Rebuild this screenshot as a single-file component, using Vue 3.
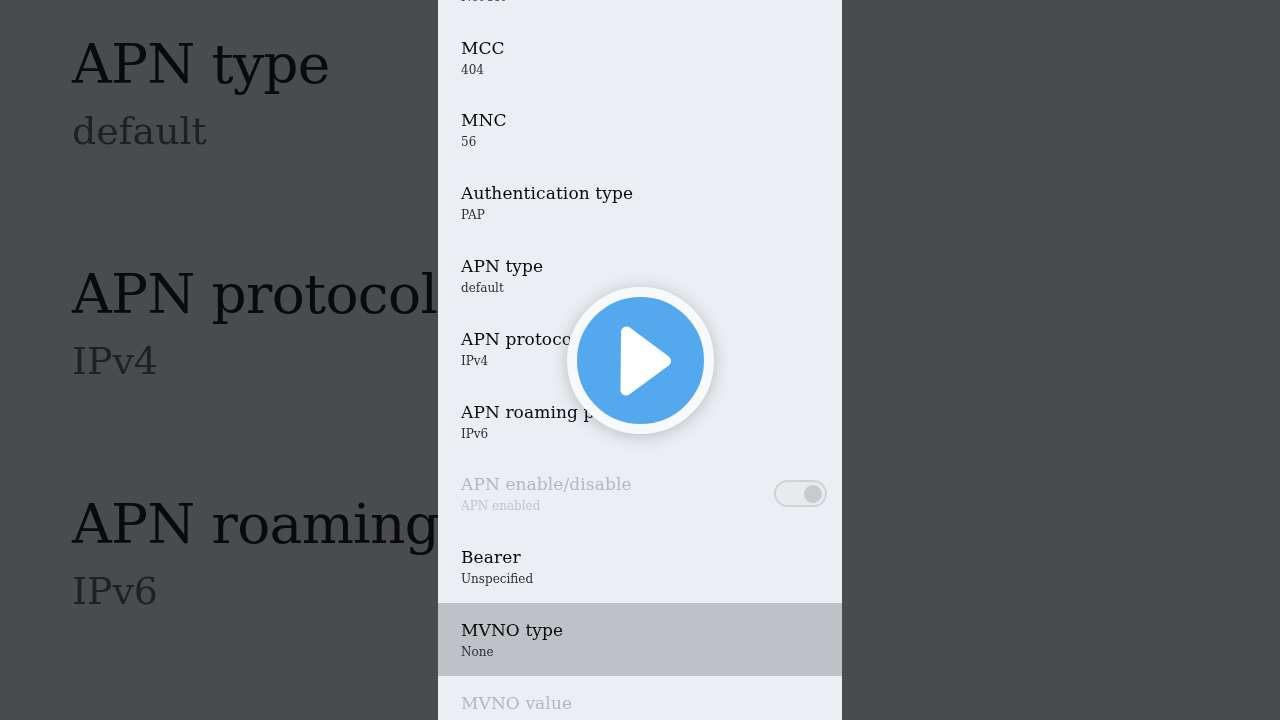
<script setup>
const rows = [
  { t: 'MMS port', s: 'Not set' },
  { t: 'MCC', s: '404' },
  { t: 'MNC', s: '56' },
  { t: 'Authentication type', s: 'PAP' },
  { t: 'APN type', s: 'default' },
  { t: 'APN protocol', s: 'IPv4' },
  { t: 'APN roaming protocol', s: 'IPv6' },
  { t: 'APN enable/disable', s: 'APN enabled', off: true, toggle: true },
  { t: 'Bearer', s: 'Unspecified' },
  { t: 'MVNO type', s: 'None', active: true },
  { t: 'MVNO value', s: '', off: true },
]
const big = [
  { t: 'APN type', s: 'default' },
  { t: 'APN protocol', s: 'IPv4' },
  { t: 'APN roaming', s: 'IPv6' },
]
</script>

<template>
  <div class="stage">
    <div class="side left">
      <div v-for="b in big" :key="b.t" class="big">
        <div class="big-t">{{ b.t }}</div>
        <div class="big-s">{{ b.s }}</div>
      </div>
    </div>
    <div class="phone">
      <div class="list">
        <div v-for="r in rows" :key="r.t" class="row" :class="{ off: r.off, active: r.active }">
          <div class="text">
            <div class="t">{{ r.t }}</div>
            <div class="s">{{ r.s }}</div>
          </div>
          <div v-if="r.toggle" class="toggle"><span class="knob"></span></div>
        </div>
      </div>
    </div>
    <div class="side"></div>
    <div class="play">
      <svg width="52" height="70" viewBox="0 0 52 70">
        <path d="M6.5 6 L45.5 35 L6 64 Z" fill="#fff" stroke="#fff" stroke-width="11" stroke-linejoin="round" />
      </svg>
    </div>
  </div>
</template>

<style>
html, body { margin: 0; background: #4a4b4d; }
</style>

<style scoped>
.stage {
  position: relative;
  display: flex;
  width: 1280px;
  height: 720px;
  overflow: hidden;
  background: #4a4b4d;
  font-family: "DejaVu Serif", "Liberation Serif", serif;
}
.side { flex: none; width: 438px; box-sizing: border-box; }
.left {
  display: flex;
  flex-direction: column;
  gap: 96px;
  padding: 31px 0 0 72px;
  overflow: hidden;
  white-space: nowrap;
  filter: blur(0.7px);
}
.big { height: 134px; }
.big-t {
  font-size: 55px;
  line-height: 66px;
  color: #090a0c;
  letter-spacing: -0.7px;
}
.big-s {
  font-size: 38px;
  line-height: 48px;
  margin-top: 10px;
  color: #1f2023;
  letter-spacing: -0.1px;
}
.phone {
  width: 404px;
  flex: none;
  background: #ebeff3;
  overflow: hidden;
}
.list { margin-top: -52px; filter: blur(0.3px); }
.row {
  display: flex;
  align-items: center;
  justify-content: space-between;
  height: 72.8px;
  box-sizing: border-box;
  padding: 0 15px 0 23px;
}
.t {
  font-size: 17px;
  line-height: 24px;
  color: #08090b;
  letter-spacing: 0.1px;
}
.s {
  font-size: 12px;
  line-height: 18px;
  min-height: 18px;
  margin-top: 1px;
  color: #2c2e32;
}
.off .t { color: #b4b7bb; }
.off .s { color: #c0c3c7; }
.active { background: #bec1c5; }
.toggle {
  width: 49px;
  height: 23px;
  border: 2px solid #d0d3d6;
  border-radius: 14px;
  position: relative;
  background: #e8ebee;
}
.knob {
  position: absolute;
  right: 3px;
  top: 2.5px;
  width: 18px;
  height: 18px;
  border-radius: 50%;
  background: #c8cacd;
}
.play {
  position: absolute;
  left: 567px;
  top: 287px;
  width: 127px;
  height: 127px;
  border: 10px solid #f7f9fb;
  border-radius: 50%;
  background: #54a9ee;
  box-shadow: 0 2px 16px rgba(60, 65, 70, 0.3);
  display: flex;
  align-items: center;
  justify-content: center;
}
.play svg { margin-left: 11px; }
</style>
